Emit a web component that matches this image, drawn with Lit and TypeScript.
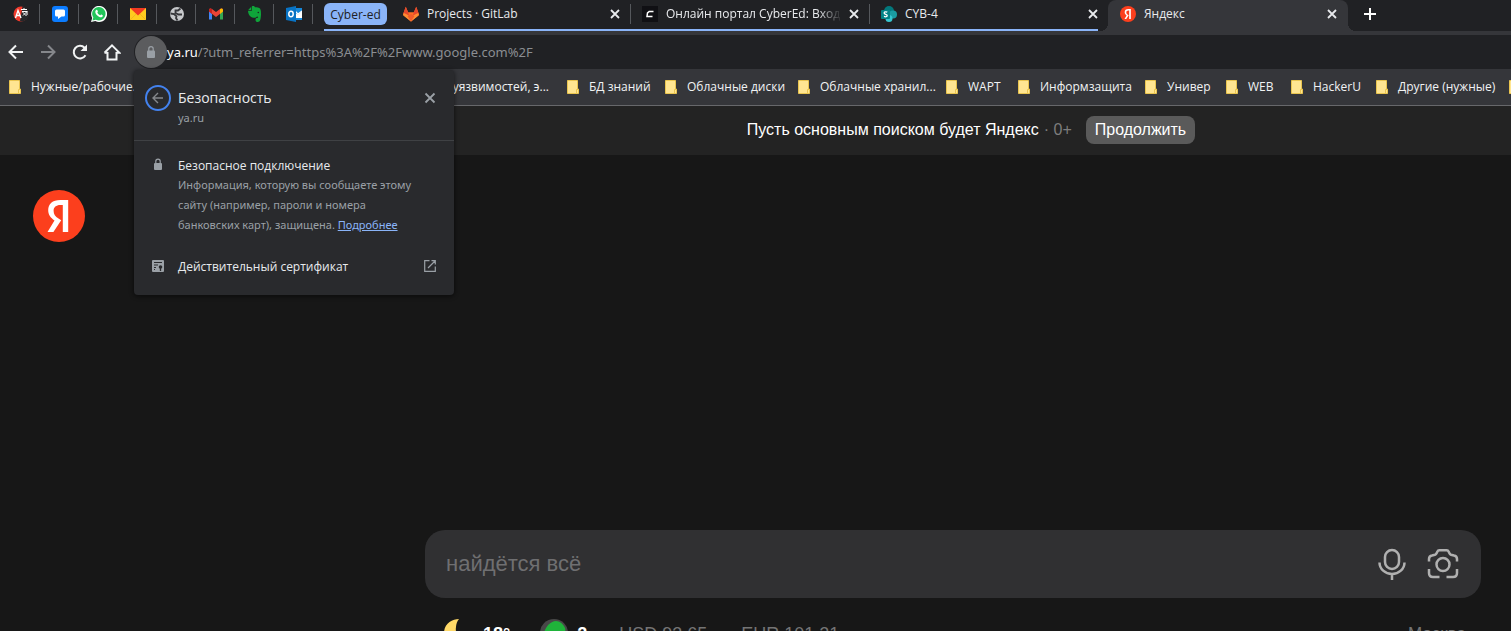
import { LitElement, html, css, svg, TemplateResult } from "lit";
import { customElement, state } from "lit/decorators.js";
import { classMap } from "lit/directives/class-map.js";

const icon = (box: number, body: TemplateResult, cls = "i16") =>
  html`<svg class=${cls} viewBox="0 0 ${box} ${box}" aria-hidden="true">${body}</svg>`;

const closeMark = icon(16, svg`<path d="M4 4l8 8M12 4l-8 8" stroke="currentColor" stroke-width="1.8" fill="none"/>`);

const yandexMark = (cls: string) => icon(52, svg`
  <circle cx="26" cy="26" r="26" fill="#fc3f1d"/>
  <path d="M29.8 42h5.4V10h-7.9c-7.9 0-12.1 4.1-12.1 10.100 0 4.800 2.300 7.600 6.300 10.500L14.500 42h5.900l7.800-11.700-2.700-1.800c-3.300-2.200-4.900-4-4.900-7.800 0-3.400 2.400-5.700 6.800-5.700h2.400z" fill="#fff"/>`, cls);

const pinned: { name: string; art: TemplateResult }[] = [
  { name: "Перевод", art: svg`<circle cx="8" cy="8" r="7.500" fill="#f0392b"/><path d="M9.500.6A7.500 7.500 0 0 1 9 15.500L7 15z" fill="#26272a"/><path d="M2.500 12L5 4.500 8 12M3.500 9.500h3.800" stroke="#fff" stroke-width="1.400" fill="none"/><path d="M8 3.500h6M11 2v2M9 5.500h5l-4 4M9.500 6l4 4M14 5v4" stroke="#fff" stroke-width="1" fill="none"/>` },
  { name: "Чат", art: svg`<rect width="16" height="16" rx="3" fill="#0b7cff"/><path d="M4.500 3.500h7a1.500 1.500 0 0 1 1.500 1.500v4a1.500 1.500 0 0 1-1.500 1.500H9.500L6 13v-2.500H4.500A1.500 1.500 0 0 1 3 9V5a1.500 1.500 0 0 1 1.500-1.500z" fill="#fff"/>` },
  { name: "WhatsApp", art: svg`<path d="M0 16l1.200-4A8 8 0 1 1 4.300 15z" fill="#fff"/><path d="M1.500 14.500l.8-3a6.700 6.700 0 1 1 2.500 2.200z" fill="#22c55a"/><path d="M5.300 4c.5-.4 1-.2 1.200.4l.4 1c.1.500-.7.9-.5 1.300.6 1.200 1.600 2 2.700 2.500.4.200.8-.9 1.300-.7l1.200.7c.7.400 0 1.900-1.300 2.100C7.500 11.500 4 8 4.300 5.500c.1-.7.5-1.200 1-1.500z" fill="#fff"/>` },
  { name: "Почта", art: svg`<rect y="2" width="16" height="12" fill="#ffcc1f"/><path d="M0 2h16L8 9.500z" fill="#f13a22"/><path d="M0 14l6-6M16 14l-6-6" stroke="#e9a91c" stroke-width=".6"/>` },
  { name: "Сайт", art: svg`<circle cx="8" cy="8" r="7" fill="#c6c8cb"/><path d="M11.500 2.500L9 4.500H6.500V7l3 1.500h3.500M1.500 7.500L5 8l2.500 2.200-.5 1.800 1.500 2.500" stroke="#35363a" stroke-width="1.800" fill="none"/>` },
  { name: "Gmail", art: svg`<path d="M1 13.500V4l3 2.500v7z" fill="#4285f4"/><path d="M12 13.500v-7L15 4v9.500z" fill="#34a853"/><path d="M1 4c0-1.600 1.700-2 3-1l4 3 4-3c1.300-1 3-.6 3 1v1.500L8 11 1 5.500z" fill="#ea4335"/><path d="M12 3c1.300-1 3-.6 3 1v1.500l-3 2.400z" fill="#fbbc04"/><path d="M1 4v1.500l3 2.400V3C2.700 2 1 2.400 1 4z" fill="#c5221f"/>` },
  { name: "Evernote", art: svg`<path d="M6 0c1.500 0 1.800.7 2 1.300 2 .1 4.200.3 5 1.200.9 1.200 1.200 4.500.9 7.500-.2 3-.8 6-3 6-1.500 0-2.400-.8-2.400-2.300 0-1.300 1-2.200 2.600-2-.1-1-.5-1.200-1.100-1.200-.7 1-2 1.500-3.500 1.200C3 11.300 1.300 8.500 1 5h3.700V1.200C4.700.4 5.200 0 6 0zM4 .9V4.300H1z" fill="#0fa43a"/><circle cx="11.300" cy="6.500" r=".8" fill="#202124"/>` },
  { name: "Outlook", art: svg`<rect x="8" y="3" width="8" height="10" fill="#fff"/><path d="M8 2h8v3l-4 3.500L8 6zM8 12h8v2H8z" fill="#1687d9"/><path d="M9 5l3 3 4-3" stroke="#fff" stroke-width="1.200" fill="none"/><path d="M0 2l10-2v16L0 14z" fill="#0873c4"/><ellipse cx="5" cy="8" rx="2.200" ry="2.700" fill="none" stroke="#fff" stroke-width="1.500"/>` },
];

const tabs: { title: string; art: TemplateResult; active?: boolean }[] = [
  { title: "Projects · GitLab", art: icon(16, svg`<path d="M8 15.500L.4 9.600 0 8.300 2.800.8l2.300 5.400h5.800L13.200.8 16 8.300l-.4 1.300z" fill="#fc6d26"/><path d="M2.800.8l2.300 5.400L8 15.500.2 8zM13.200.8l-2.300 5.400L8 15.500 15.800 8z" fill="#e5472c"/><path d="M8 15.500L0 9l1-2 7 3.500L15 7l1 2z" fill="#fc8d32"/><path d="M8 15.500L4.500 10 8 8l3.500 2z" fill="#ef5b2b"/>`) },
  { title: "Онлайн портал CyberEd: Вход на портал", art: icon(16, svg`<rect width="16" height="16" fill="#101014"/><path d="M11.500 5.500H7.200L5.500 7l-.5 3.500h5.500" stroke="#fff" stroke-width="1.500" fill="none"/>`) },
  { title: "CYB-4", art: icon(16, svg`<circle cx="8" cy="5" r="5" fill="#03787c"/><circle cx="12" cy="8.500" r="4" fill="#1a9ba1"/><circle cx="8" cy="12.500" r="3.500" fill="#37c6d0"/><rect x="0" y="4" width="9" height="9" rx="1" fill="#038387"/><path d="M6.300 6.200C4.500 5.300 3 6 3.200 7.200c.2 1.300 3 1 3 2.400 0 1.200-1.700 1.500-3.200.8" stroke="#fff" stroke-width="1.300" fill="none"/>`) },
  { title: "Яндекс", art: yandexMark("i16"), active: true },
];

const bookmarks = [
  "Нужные/рабочие...", ", уязвимостей, э...", "БД знаний", "Облачные диски", "Облачные хранил...", "WAPT",
  "Информзащита", "Универ", "WEB", "HackerU", "Другие (нужные)", "",
];

const base = css`
  * { box-sizing: border-box; }
  button { border: 0; padding: 0; margin: 0; background: none; color: inherit; font: inherit; display: grid; place-items: center; }
  a { color: inherit; text-decoration: none; }
  svg { display: block; flex: none; }
  .i16 { width: 16px; height: 16px; }
`;

@customElement("tab-strip")
export class TabStrip extends LitElement {
  static styles = [base, css`
    :host { display: flex; height: 31px; background: #202124; color: #e8eaed; font-size: 12px; }
    .pins { display: flex; padding-left: 1px; }
    .pin { width: 39px; height: 28px; position: relative; }
    .pin::after, .tab.ruled::after { content: ""; position: absolute; right: 0; top: 4px; width: 1px; height: 20px; background: #55585c; }
    .group { display: flex; border-bottom: 2px solid #8ab4f8; margin-left: 11px; }
    .chip { height: 22px; margin-top: 3px; width: 63px; border-radius: 6px; background: #8ab4f8; color: #202124; }
    .tab { position: relative; display: flex; align-items: center; width: 239px; height: 28px; padding: 0 8px 0 11px; }
    .group .tab:nth-child(2) { width: 244px; padding-left: 16px; }
    .group .tab:last-child { width: 228px; padding-right: 0; }
    .title { flex: 1; margin-left: 8px; overflow: hidden; white-space: nowrap; line-height: 20px; }
    .long .title { mask-image: linear-gradient(90deg, #000 calc(100% - 24px), transparent); }
    .close { width: 16px; height: 16px; margin-left: 4px; }
    .group .tab:last-child .close { margin-right: -3px; }
    .active { width: 240px; height: 31px; padding: 0 8px 3px 12px; margin-left: 10px; background: #35363a; border-radius: 8px 8px 0 0; }
    .active::before, .active::after { content: ""; position: absolute; bottom: 0; width: 8px; height: 8px; }
    .active::before { right: 100%; background: radial-gradient(circle at 0 0, transparent 8px, #35363a 8px); }
    .active::after { left: 100%; background: radial-gradient(circle at 100% 0, transparent 8px, #35363a 8px); }
    .new { width: 28px; height: 28px; margin-left: 8px; }
  `];
  private tab(t: (typeof tabs)[number], i: number) {
    return html`<div class=${classMap({ tab: true, active: !!t.active, ruled: i < 2, long: i === 1 })} role="tab">
      ${t.art}<span class="title">${t.title}</span>
      <button class="close" aria-label="Закрыть">${closeMark}</button></div>`;
  }
  render() {
    return html`
      <div class="pins">${pinned.map((p) => html`<button class="pin" aria-label=${p.name}>${icon(16, p.art)}</button>`)}</div>
      <div class="group"><button class="chip">Cyber-ed</button>${tabs.slice(0, 3).map((t, i) => this.tab(t, i))}</div>
      ${this.tab(tabs[3], 3)}
      <button class="new" aria-label="Новая вкладка">${icon(16, svg`<path d="M8 2v12M2 8h12" stroke="#fff" stroke-width="2"/>`)}</button>`;
  }
}

@customElement("nav-bar")
export class NavBar extends LitElement {
  static styles = [base, css`
    :host { display: flex; align-items: flex-end; height: 38px; background: #35363a; color: #f1f3f4; }
    .nav { width: 32px; height: 34px; }
    .off { color: #85878b; }
    .address { flex: 1; display: flex; align-items: center; height: 34px; margin-left: 6px; background: #202124; border-radius: 17px 0 0 17px; }
    .lock { width: 32px; height: 32px; margin-left: 1px; border-radius: 50%; background: #5b5c5e; color: #9aa0a6; }
    .url { flex: 1; display: flex; font: 13px/20px "Noto Sans", sans-serif; color: #fff; }
    input { flex: 1; min-width: 0; border: 0; padding: 0; background: none; font: inherit; color: #8b8e92; outline: 0; }
    .i18 { width: 18px; height: 18px; }
  `];
  render() {
    return html`
      <button class="nav" aria-label="Назад">${icon(18, svg`<path d="M16 9H3M9 2.500L2.500 9 9 15.500" stroke="currentColor" stroke-width="2" fill="none"/>`, "i18")}</button>
      <button class="nav off" aria-label="Вперёд">${icon(18, svg`<path d="M2 9h13M9 2.500L15.500 9 9 15.500" stroke="currentColor" stroke-width="2" fill="none"/>`, "i18")}</button>
      <button class="nav" aria-label="Обновить">${icon(18, svg`<path d="M14.500 12.300A6.300 6.300 0 1 1 13.600 4.700L15 6" stroke="currentColor" stroke-width="2" fill="none"/><path d="M16 1.500V8H9.500z" fill="currentColor"/>`, "i18")}</button>
      <button class="nav" aria-label="Главная">${icon(18, svg`<path d="M4.500 9v7.500h9V9M1.500 9.800L9 2.300l7.500 7.500h-3M1.500 9.800h3" stroke="currentColor" stroke-width="2" fill="none"/>`, "i18")}</button>
      <div class="address">
        <button class="lock" aria-label="Сведения о сайте">${icon(16, svg`<rect x="4" y="6.500" width="8" height="7.500" rx="1" fill="currentColor"/><path d="M5.800 7V4.800a2.200 2.200 0 0 1 4.400 0V7" stroke="currentColor" stroke-width="1.200" fill="none"/>`)}</button>
        <label class="url"><span>ya.ru</span><input aria-label="Адрес" .value=${"/?utm_referrer=https%3A%2F%2Fwww.google.com%2F"} /></label>
      </div>`;
  }
}

@customElement("bookmark-bar")
export class BookmarkBar extends LitElement {
  static styles = [base, css`
    :host { display: grid; grid-template-columns: 128px 394px 80px 115px 130px 54px 109px 63px 47px 67px 115px 12px; column-gap: 18px; align-items: center;
      height: 37px; padding-left: 9px; overflow: hidden; background: #35363a; border-bottom: 1px solid #67686b; color: #f1f3f4; font-size: 12px; }
    a { display: flex; align-items: center; gap: 10px; white-space: nowrap; line-height: 20px; }
    a:nth-child(2) { justify-content: flex-end; }
    .folder { width: 12px; height: 14px; }
  `];
  render() {
    return bookmarks.map((b) => html`<a href="#" aria-label=${b || "Папка"}>
      <svg class="folder" viewBox="0 0 12 14" aria-hidden="true"><path d="M.5.5h10V9h1v4.500H.5z" fill="#ffe591" stroke="#eac54f"/><path d="M9.500 13V9.500h1.500" stroke="#eac54f" fill="none"/></svg>
      <span>${b}</span></a>`);
  }
}

@customElement("security-popup")
export class SecurityPopup extends LitElement {
  static styles = [base, css`
    :host { display: block; width: 320px; background: #292a2d; border-radius: 4px; box-shadow: 0 1px 4px 1px rgba(0, 0, 0, .45); color: #e8eaed; font-size: 12px; padding-bottom: 12px; }
    header, .row { display: grid; grid-template-columns: 26px 1fr 26px; column-gap: 7px; padding: 0 11px; }
    header { height: 71px; padding-top: 15px; border-bottom: 1px solid #3f4144; }
    .back { width: 26px; height: 26px; border: 2px solid #4382ee; border-radius: 50%; color: #85888c; }
    h1 { margin: 0; font-size: 14px; font-weight: 400; line-height: 26px; }
    p { margin: 0; color: #9aa0a6; font: 11px/20px "Noto Sans", sans-serif; }
    .host { line-height: 14px; }
    .x { height: 26px; color: #9aa0a6; }
    .row { padding-top: 15px; white-space: nowrap; }
    .row > svg { justify-self: center; color: #9aa0a6; margin-top: 1px; }
    .name { line-height: 20px; }
    .row:nth-of-type(1) .name { line-height: 19px; }
    .row + .row { padding-top: 22px; padding-bottom: 6px; }
    .more { color: #8ab4f8; text-decoration: underline; }
  `];
  render() {
    return html`
      <header>
        <button class="back" aria-label="Назад">${icon(16, svg`<path d="M13 8H3.500M8 3L3 8l5 5" stroke="currentColor" stroke-width="1.400" fill="none"/>`)}</button>
        <div><h1>Безопасность</h1><p class="host">ya.ru</p></div>
        <button class="x" aria-label="Закрыть">${icon(16, svg`<path d="M3.500 3.500l9 9M12.500 3.500l-9 9" stroke="currentColor" stroke-width="1.800"/>`)}</button>
      </header>
      <div class="row">
        ${icon(16, svg`<rect x="4" y="6" width="8" height="7" rx="1" fill="currentColor"/><path d="M5.800 7V4.300a2.200 2.200 0 0 1 4.400 0V7" stroke="currentColor" stroke-width="1.200" fill="none"/>`)}
        <div><div class="name">Безопасное подключение</div>
          <p>Информация, которую вы сообщаете этому<br />сайту (например, пароли и номера<br />банковских карт), защищена. <a class="more" href="#">Подробнее</a></p></div>
      </div>
      <div class="row">
        ${icon(16, svg`<rect x="2" y="2" width="12" height="12" rx="1" fill="currentColor"/><path d="M4 4.500h8M4 7h4M4 9.500h2M4 11.500h1" stroke="#292a2d"/><circle cx="10.500" cy="9" r="1.800" fill="#292a2d"/><path d="M10.500 10v3" stroke="#292a2d" stroke-width="1.300"/>`)}
        <div class="name">Действительный сертификат</div>
        ${icon(16, svg`<path d="M7.500 2.700H2.700v10.600h10.600V8.500M9.500 2.700h3.800v3.800M13 3L6 10" stroke="currentColor" stroke-width="1.200" fill="none"/>`)}
      </div>`;
  }
}

@customElement("app-root")
export class AppRoot extends LitElement {
  @state() private query = "";
  static styles = [base, css`
    :host { display: flex; flex-direction: column; position: relative; height: 100vh; overflow: hidden; background: #171717; font-family: "Open Sans", "Noto Sans", sans-serif; }
    .popup { position: absolute; left: 134px; top: 70px; }
    .page { display: flex; flex-direction: column; flex: 1; min-height: 0; font-family: "Liberation Sans", Arial, sans-serif; }
    .banner { display: flex; flex: none; align-items: center; justify-content: center; height: 49px; padding: 0 0 2px 431px; background: #232323; color: #fff; font-size: 16px; line-height: 20px; }
    .age { margin-left: 5px; color: #7d7d7d; }
    .go { height: 28px; margin-left: 14px; padding: 0 9px; border-radius: 8px; background: #5a5a5a; }
    .logo { width: 52px; height: 52px; margin: 35px 0 0 33px; }
    .main { margin: auto 30px 0 425px; }
    .search { display: flex; align-items: center; height: 68px; padding: 0 22px 0 21px; border-radius: 20px; background: #303032; }
    input { flex: 1; min-width: 0; border: 0; padding: 0; background: none; outline: 0; color: #fff; font: 22px/28px "Liberation Sans", Arial, sans-serif; }
    input::placeholder { color: #6f6f71; opacity: 1; }
    .tool { margin-left: 19px; }
    .i32 { width: 32px; height: 32px; }
    .info { display: flex; align-items: flex-start; height: 33px; padding: 21px 15px 0 17px; color: #747474; font-size: 18px; line-height: 30px; white-space: nowrap; }
    .info b { color: #fff; }
    .i24 { width: 24px; height: 24px; }
    .i28 { width: 28px; height: 28px; }
    .temp { margin: 0 30px 0 17px; }
    .jam { margin: 0 32px 0 9px; }
    .rate { margin-right: 34px; }
    .city { margin-left: auto; font-size: 17px; }
  `];
  render() {
    return html`
      <tab-strip></tab-strip>
      <nav-bar></nav-bar>
      <bookmark-bar></bookmark-bar>
      <main class="page">
        <div class="banner"><span>Пусть основным поиском будет Яндекс</span><span class="age">· 0+</span><button class="go">Продолжить</button></div>
        <a class="logo" href="#" aria-label="Яндекс">${yandexMark("logo-art")}</a>
        <div class="main">
          <form class="search" @submit=${(e: Event) => e.preventDefault()}>
            <input placeholder="найдётся всё" aria-label="Поиск" .value=${this.query} @input=${(e: InputEvent) => (this.query = (e.target as HTMLInputElement).value)} />
            <button class="tool" type="button" aria-label="Голосовой поиск">${icon(32, svg`<rect x="9" y="2" width="14" height="19" rx="7" fill="none" stroke="#b0b0b0" stroke-width="2.500"/><path d="M3.500 14.500a12.500 11.500 0 0 0 25 0M16 26v6" fill="none" stroke="#b0b0b0" stroke-width="2.500"/>`, "i32")}</button>
            <button class="tool" type="button" aria-label="Поиск по картинке">${icon(32, svg`<g fill="none" stroke="#b0b0b0" stroke-width="2.500"><path d="M2 13.500V11q0-3 3-3.500l3-.8q1.200-.4 1.700-1.600l.6-1.400q.6-1.400 2-1.400h7.400q1.400 0 2 1.400l.6 1.400q.5 1.200 1.700 1.600l3 .8q3 .5 3 3.500v2.500M2 21v4q0 4 4 4h6.500M30 21v4q0 4-4 4h-6.500"/><circle cx="16" cy="16.500" r="6.500"/></g>`, "i32")}</button>
          </form>
          <div class="info">
            ${icon(24, svg`<path d="M17 0C10 0 2 5 2 14s6 10 10 10 8-2 10-6C16 19 13 14 14 8c.3-3 1-6 3-8z" fill="#ffd968"/>`, "i24")}
            <b class="temp">18°</b>
            ${icon(28, svg`<circle cx="14" cy="14" r="14" fill="#484848"/><path d="M16 2c4 0 7 3 9 7s-5 15-11 15S3 19 4 14 10 2 16 2z" fill="#1fb33a"/>`, "i28")}
            <b class="jam">2</b>
            <span class="rate">USD 93.65</span><span class="rate">EUR 101.21</span>
            <span class="city">Москва</span>
          </div>
        </div>
      </main>
      <security-popup class="popup"></security-popup>`;
  }
}
